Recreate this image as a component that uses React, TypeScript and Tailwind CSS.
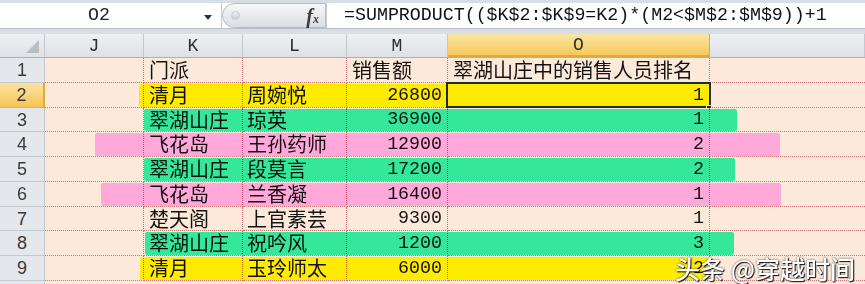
import React from "react";

/* ─── Sheet data ─────────────────────────────────────────────────────────── */
type Row = {
  n: number;
  h: string;
  k: string;
  l: string;
  m: string;
  o: string;
  mark?: string; // highlighter stroke (absolute, over the cells' background)
};

const ROWS: Row[] = [
  { n: 1, h: "h-[25px]", k: "门派", l: "", m: "销售额", o: "翠湖山庄中的销售人员排名" },
  { n: 2, h: "h-[25px]", k: "清月", l: "周婉悦", m: "26800", o: "1", mark: "left-[139px] w-[571px] bg-[#ffeb00]" },
  { n: 3, h: "h-[24px]", k: "翠湖山庄", l: "琼英", m: "36900", o: "1", mark: "left-[144px] w-[593px] bg-[#35e79a]" },
  { n: 4, h: "h-[25px]", k: "飞花岛", l: "王孙药师", m: "12900", o: "2", mark: "left-[95px] w-[685px] bg-[#ffa8d9]" },
  { n: 5, h: "h-[25px]", k: "翠湖山庄", l: "段莫言", m: "17200", o: "2", mark: "left-[144px] w-[591px] bg-[#35e79a]" },
  { n: 6, h: "h-[25px]", k: "飞花岛", l: "兰香凝", m: "16400", o: "1", mark: "left-[101px] w-[680px] bg-[#ffa8d9]" },
  { n: 7, h: "h-[24px]", k: "楚天阁", l: "上官素芸", m: "9300", o: "1" },
  { n: 8, h: "h-[25px]", k: "翠湖山庄", l: "祝吟风", m: "1200", o: "3", mark: "left-[145px] w-[589px] bg-[#35e79a]" },
  { n: 9, h: "h-[25px]", k: "清月", l: "玉玲师太", m: "6000", o: "2", mark: "left-[140px] w-[568px] bg-[#ffeb00]" },
];

const GRID = "border-b border-dotted border-b-[#d07a87]";
const VLINE = "border-r border-dotted border-r-[#d07a87]";
const CJK = "font-['Noto_Sans_CJK_SC',sans-serif] text-[20px]";
const MONO = "font-['Liberation_Mono','Noto_Sans_CJK_SC',monospace] text-[18.3px]";

/* ─── Formula bar ────────────────────────────────────────────────────────── */
function FormulaBar() {
  return (
    <div className="flex h-[34px] flex-col bg-[#d9dee4] pt-[3px]">
      <div className="flex h-[26px] border-b border-[#b9bfc7] bg-white">
        {/* Name box */}
        <div className="relative flex w-[222px] items-center border-r border-[#c6ccd3]">
          <span className={`${MONO} ml-[88px] leading-none text-[#222]`}>O2</span>
          <svg viewBox="0 0 8 5" className="absolute left-[204px] top-[12px] h-[5px] w-[8px]">
            <polygon points="0,0 8,0 4,5" fill="#333" />
          </svg>
        </div>
        {/* Buttons pill */}
        <div className="flex w-[104px] items-center justify-between rounded-l-full border border-[#b7bdc5] bg-linear-to-b from-[#f7f8fa] to-[#d9dde3] pl-[8px] pr-[6px]">
          <span className="h-[9px] w-[9px] rounded-full border border-[#c4c9d0] bg-linear-to-b from-[#eef0f3] to-[#c9ced5]" />
          <span className="font-['Liberation_Serif',serif] text-[20px] font-bold italic leading-none text-[#3b3b3b]">
            f<span className="text-[12px]">x</span>
          </span>
        </div>
        {/* Formula */}
        <div className="flex flex-1 items-center border-l border-[#c6ccd3] pl-[17px]">
          <span className={`${MONO} whitespace-nowrap leading-none text-[#111]`}>
            =SUMPRODUCT(($K$2:$K$9=K2)*(M2&lt;$M$2:$M$9))+1
          </span>
        </div>
      </div>
    </div>
  );
}

/* ─── Column headers ─────────────────────────────────────────────────────── */
function HeaderRow() {
  const cell =
    "flex items-center justify-center border-r border-[#c3c8cf] bg-linear-to-b from-[#eef0f3] to-[#dde1e6]";
  return (
    <div className={`flex h-[24px] border-b border-[#a9b1bb] ${MONO} text-[18px] leading-none text-[#2e2e2e]`}>
      <div className={`relative w-[45px] ${cell}`}>
        <svg viewBox="0 0 12 12" className="absolute right-[5px] bottom-[4px] h-[13px] w-[13px]">
          <polygon points="12,0 12,12 0,12" fill="#b9bec5" />
        </svg>
      </div>
      <div className={`w-[99px] ${cell}`}>J</div>
      <div className={`w-[99px] ${cell}`}>K</div>
      <div className={`w-[104px] ${cell}`}>L</div>
      <div className={`w-[101px] ${cell}`}>M</div>
      <div className="flex w-[262px] items-center justify-center border-r border-b-2 border-[#e2a93a] bg-linear-to-b from-[#fbe5a4] to-[#f6c956]">
        O
      </div>
      <div className={`flex-1 ${cell}`} />
    </div>
  );
}

/* ─── Data row ───────────────────────────────────────────────────────────── */
function SheetRow({ row }: { row: Row }) {
  const selected = row.n === 2;
  const head = row.n === 1;
  const textCls = head ? `${CJK} justify-start pl-[5px]` : `${MONO} justify-end pr-[5px]`;

  return (
    <div className={`relative flex ${row.h} bg-[#fde9da]`}>
      {row.mark && <div className={`absolute top-[1px] bottom-[1px] rounded-[2px] ${row.mark}`} />}

      {/* Row header */}
      <div
        className={`relative flex w-[45px] items-center justify-center font-['Liberation_Sans',sans-serif] text-[18px] leading-none text-[#3a3a3a] ${
          selected
            ? "border-r-2 border-b border-r-[#e2a93a] border-b-[#e0b04c] bg-linear-to-b from-[#fbe3a0] to-[#f5c653]"
            : "border-r border-b border-[#c3c8cf] bg-[#e4e7ec]"
        }`}
      >
        {row.n}
      </div>

      <div className="relative flex flex-1 leading-none text-[#141414] mix-blend-multiply">
        <div className={`w-[99px] ${GRID} ${VLINE}`} />
        <div className={`flex w-[99px] items-center pl-[5px] ${CJK} ${GRID} ${VLINE}`}>{row.k}</div>
        <div className={`flex w-[104px] items-center pl-[4px] ${CJK} ${GRID} ${VLINE}`}>{row.l}</div>
        <div className={`flex w-[101px] items-center ${textCls} ${GRID} ${VLINE}`}>{row.m}</div>
        <div className={`flex w-[262px] items-center whitespace-nowrap ${textCls} ${GRID} ${VLINE}`}>{row.o}</div>
        <div className={`flex-1 ${GRID}`} />
      </div>

      {/* Active cell O2 */}
      {selected && (
        <>
          <div className="absolute left-[446px] top-[-1px] h-[26px] w-[265px] border-2 border-[#1c2f2f]" />
          <div className="absolute left-[706px] top-[22px] h-[6px] w-[6px] border border-[#d9e6e6] bg-[#1c2f2f]" />
        </>
      )}
    </div>
  );
}

/* ─── Component ──────────────────────────────────────────────────────────── */
export default function App() {
  return (
    <div className="relative h-[284px] w-[865px] overflow-hidden bg-[#fde9da]">
      <FormulaBar />
      <HeaderRow />
      {ROWS.map((row) => (
        <SheetRow key={row.n} row={row} />
      ))}
      <div className="flex h-[3px]">
        <div className="w-[45px] border-r border-[#c3c8cf] bg-[#e4e7ec]" />
      </div>

      {/* Watermark */}
      <span className="absolute right-[10px] bottom-[3px] font-['Noto_Sans_CJK_SC',sans-serif] text-[25px] font-medium leading-none text-white [text-shadow:1px_1px_1px_rgba(0,0,0,0.9),0_0_2px_rgba(0,0,0,0.8)]">
        头条 @穿越时间
      </span>
    </div>
  );
}
